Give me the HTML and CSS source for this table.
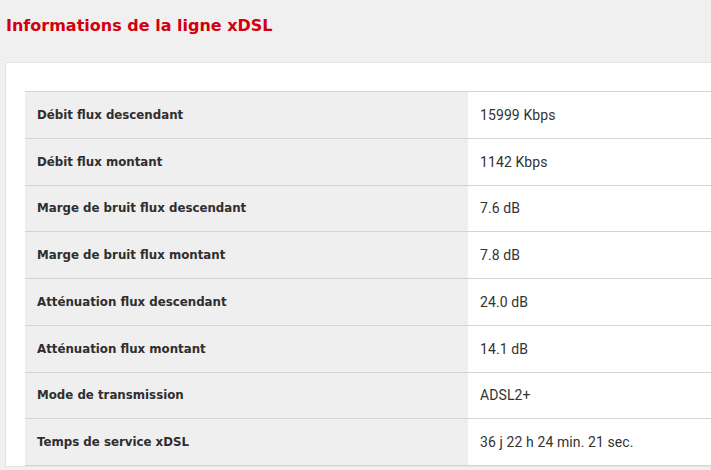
FILE: index.html
```html
<!DOCTYPE html>
<html lang="fr">
<head>
<meta charset="utf-8">
<link rel="stylesheet" href="styles.css">
</head>
<body>
<h1 class="title">Informations de la ligne xDSL</h1>
<div class="panel">
  <div class="info">
    <div class="row"><div class="label">Débit flux descendant</div><div class="value">15999 Kbps</div></div>
    <div class="row"><div class="label">Débit flux montant</div><div class="value">1142 Kbps</div></div>
    <div class="row"><div class="label">Marge de bruit flux descendant</div><div class="value">7.6 dB</div></div>
    <div class="row"><div class="label">Marge de bruit flux montant</div><div class="value">7.8 dB</div></div>
    <div class="row"><div class="label">Atténuation flux descendant</div><div class="value">24.0 dB</div></div>
    <div class="row"><div class="label">Atténuation flux montant</div><div class="value">14.1 dB</div></div>
    <div class="row"><div class="label">Mode de transmission</div><div class="value">ADSL2+</div></div>
    <div class="row"><div class="label">Temps de service xDSL</div><div class="value">36 j 22 h 24 min. 21 sec.</div></div>
  </div>
</div>
</body>
</html>
```
FILE: styles.css
```css
html, body {
  margin: 0;
  padding: 0;
  background: #f0f0f0;
  overflow: hidden;
}
body {
  width: 711px;
  height: 470px;
}
.title {
  margin: 0;
  padding: 14px 0 0 6px;
  height: 48px;
  box-sizing: border-box;
  font-family: "DejaVu Sans", sans-serif;
  font-weight: 700;
  font-size: 16px;
  color: #d0000f;
  line-height: 24px;
}
.panel {
  margin-left: 5px;
  width: 706px;
  background: #fff;
  border: 1px solid #e4e4e4;
  border-right: none;
  margin-top: 14px;
  padding: 28px 0 0 19px;
  box-sizing: border-box;
  overflow: hidden;
}
.info {
  width: 760px;
  border-bottom: 1px solid #d4d4d4;
}
.row {
  display: grid;
  grid-template-columns: 443px 1fr;
  height: 46.75px;
  box-sizing: border-box;
  border-top: 1px solid #d4d4d4;
}
.label {
  background: #efefef;
  display: flex;
  align-items: center;
  padding-left: 12px;
  font-family: "DejaVu Sans", sans-serif;
  font-weight: 700;
  font-size: 11.8px;
  color: #2e2e2e;
}
.value {
  background: #fff;
  display: flex;
  align-items: center;
  padding-left: 12px;
  font-family: Roboto, sans-serif;
  font-size: 14px;
  letter-spacing: 0.1px;
  color: #333;
}
```
